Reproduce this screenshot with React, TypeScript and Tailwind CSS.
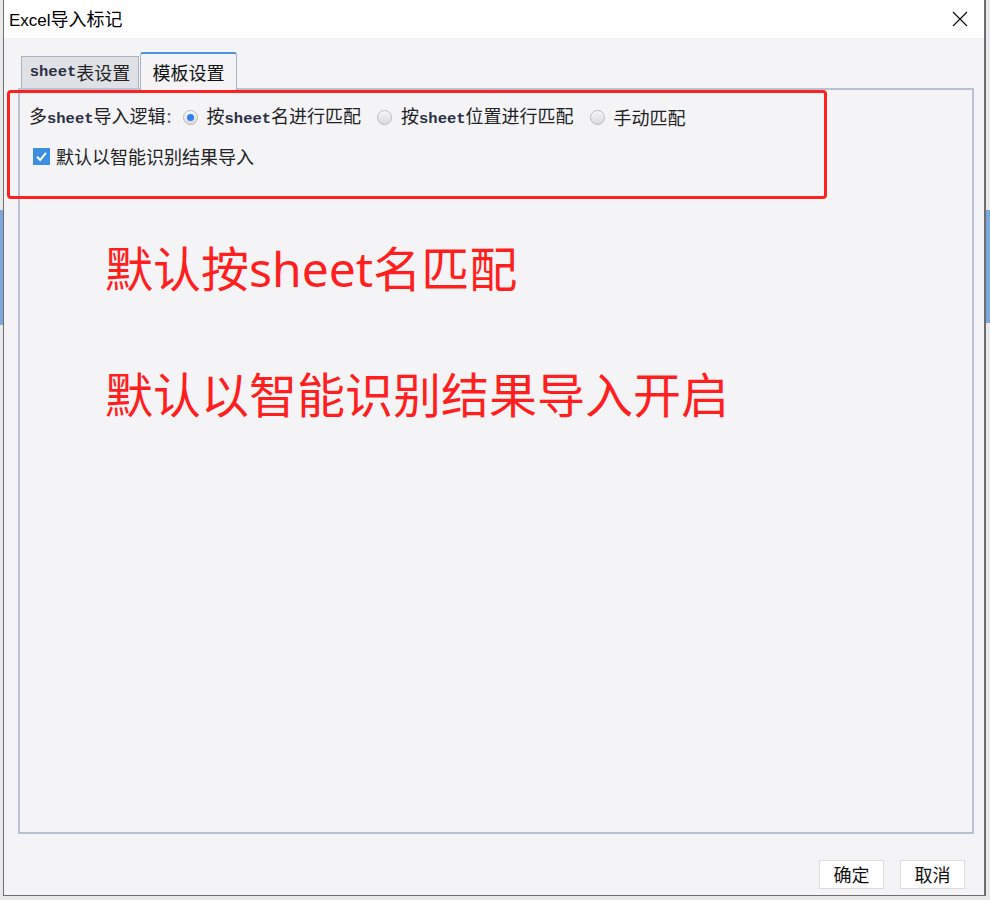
import { useState } from "react";

const cjk = "font-['Noto_Sans_CJK_SC',sans-serif]";

const Sheet = () => (
  <span className="font-['Liberation_Mono','Noto_Sans_CJK_SC',monospace] text-[15.5px] font-semibold text-[#2b2f45]">
    sheet
  </span>
);

const Radio = ({ checked, label, onClick }: { checked: boolean; label: React.ReactNode; onClick: () => void }) => (
  <label className="flex items-center gap-[9px] cursor-pointer" onClick={onClick}>
    <span className="w-[15px] h-[15px] rounded-full border border-[#b9b9b9] bg-gradient-to-b from-[#f4f4f4] to-[#dcdcdc] flex items-center justify-center shadow-[inset_0_1px_1px_rgba(255,255,255,0.9)]">
      {checked && <span className="w-[7px] h-[7px] rounded-full bg-[#2f80ed]" />}
    </span>
    <span>{label}</span>
  </label>
);

const App = () => {
  const [mode, setMode] = useState<"NAME" | "POS" | "MANUAL">("NAME");
  const [smart, setSmart] = useState(true);
  const [tab, setTab] = useState<"SHEET" | "TPL">("TPL");

  return (
    <div className={`relative w-[990px] h-[900px] bg-[#e9e9e9] overflow-hidden pl-[3px] ${cjk}`}>
      {/* spreadsheet peeking behind the dialog */}
      <div className="absolute left-0 top-[210px] w-[3px] h-[115px] bg-[#7ea8dc]" />
      <div className="absolute right-0 top-[210px] w-[4px] h-[113px] bg-[#7ea8dc]" />

      <div className="relative flex flex-col w-[983px] h-[896px] border-l border-r-2 border-b border-[#6e6e6e] bg-[#f4f4f7]">
        {/* title bar */}
        <div className="h-[38px] bg-white flex items-center justify-between pl-[5px] pr-[16px]">
          <span className="text-[18px] text-black">
            <span className="font-['Liberation_Sans',sans-serif] text-[17px]">Excel</span>导入标记
          </span>
          <svg width="16" height="16" viewBox="0 0 16 16" className="mb-[1px]">
            <path d="M1 1 L15 15 M15 1 L1 15" stroke="#111" strokeWidth="1.2" fill="none" />
          </svg>
        </div>

        {/* tabs */}
        <div className="flex items-end h-[36px] mt-[14px] ml-[17px] gap-[1px]">
          <div
            className="h-[32px] w-[118px] flex items-center justify-center border border-b-0 border-[#aab3c3] bg-[#dfe1e6] text-[18px] text-[#222] cursor-pointer"
            onClick={() => setTab("SHEET")}
          >
            <Sheet />表设置
          </div>
          <div
            className="relative z-10 h-[38px] -mb-[2px] w-[97px] flex items-center justify-center border border-b-0 border-[#aab3c3] border-t-2 border-t-[#4a94e0] rounded-t-[3px] bg-[#f4f4f7] text-[18px] text-[#111] cursor-pointer"
            onClick={() => setTab("TPL")}
          >
            模板设置
          </div>
        </div>

        {/* panel */}
        <div className="ml-[14px] mr-[10px] h-[746px] border-2 border-[#b8c2d4] bg-[#f4f4f7] pl-[9px] pt-[15px] text-[18px] text-[#222]">
          {tab === "TPL" && (
            <>
              <div className="flex items-center h-[24px]">
                <span className="mr-[11px]">
                  多<Sheet />导入逻辑<span className="text-[#666] ml-[1px]">:</span>
                </span>
                <Radio checked={mode === "NAME"} onClick={() => setMode("NAME")} label={<>按<Sheet />名进行匹配</>} />
                <span className="w-[16px]" />
                <Radio checked={mode === "POS"} onClick={() => setMode("POS")} label={<>按<Sheet />位置进行匹配</>} />
                <span className="w-[16px]" />
                <Radio checked={mode === "MANUAL"} onClick={() => setMode("MANUAL")} label="手动匹配" />
              </div>
              <label className="flex items-center gap-[6px] mt-[15px] ml-[4px] h-[24px] cursor-pointer" onClick={() => setSmart(!smart)}>
                <span className={`w-[17px] h-[17px] flex items-center justify-center ${smart ? "bg-[#3c8ee3]" : "bg-white border border-[#999]"}`}>
                  {smart && (
                    <svg width="13" height="13" viewBox="0 0 13 13">
                      <path d="M2 6.8 L5.2 10 L11 2.8" stroke="#fff" strokeWidth="2" fill="none" />
                    </svg>
                  )}
                </span>
                默认以智能识别结果导入
              </label>

              <div className="mt-[66px] ml-[76px] text-[48px] leading-[64px] text-[#ff1f1f]">
                <p>
                  默认按<span className="font-['Noto_Sans',sans-serif]">sheet</span>名匹配
                </p>
                <p className="mt-[59px]">默认以智能识别结果导入开启</p>
              </div>
            </>
          )}
        </div>

        {/* buttons */}
        <div className="flex justify-end gap-[16px] mt-[26px] pr-[19px]">
          <button className="w-[65px] h-[29px] bg-white border border-[#dcdcdc] text-[18px] text-[#111]">确定</button>
          <button className="w-[65px] h-[29px] bg-white border border-[#dcdcdc] text-[18px] text-[#111]">取消</button>
        </div>

        {/* annotation frame */}
        <div className="absolute left-[3px] top-[90px] w-[820px] h-[109px] border-[3px] border-[#ff2020] rounded-[4px] pointer-events-none" />
      </div>
    </div>
  );
};

export default App;
